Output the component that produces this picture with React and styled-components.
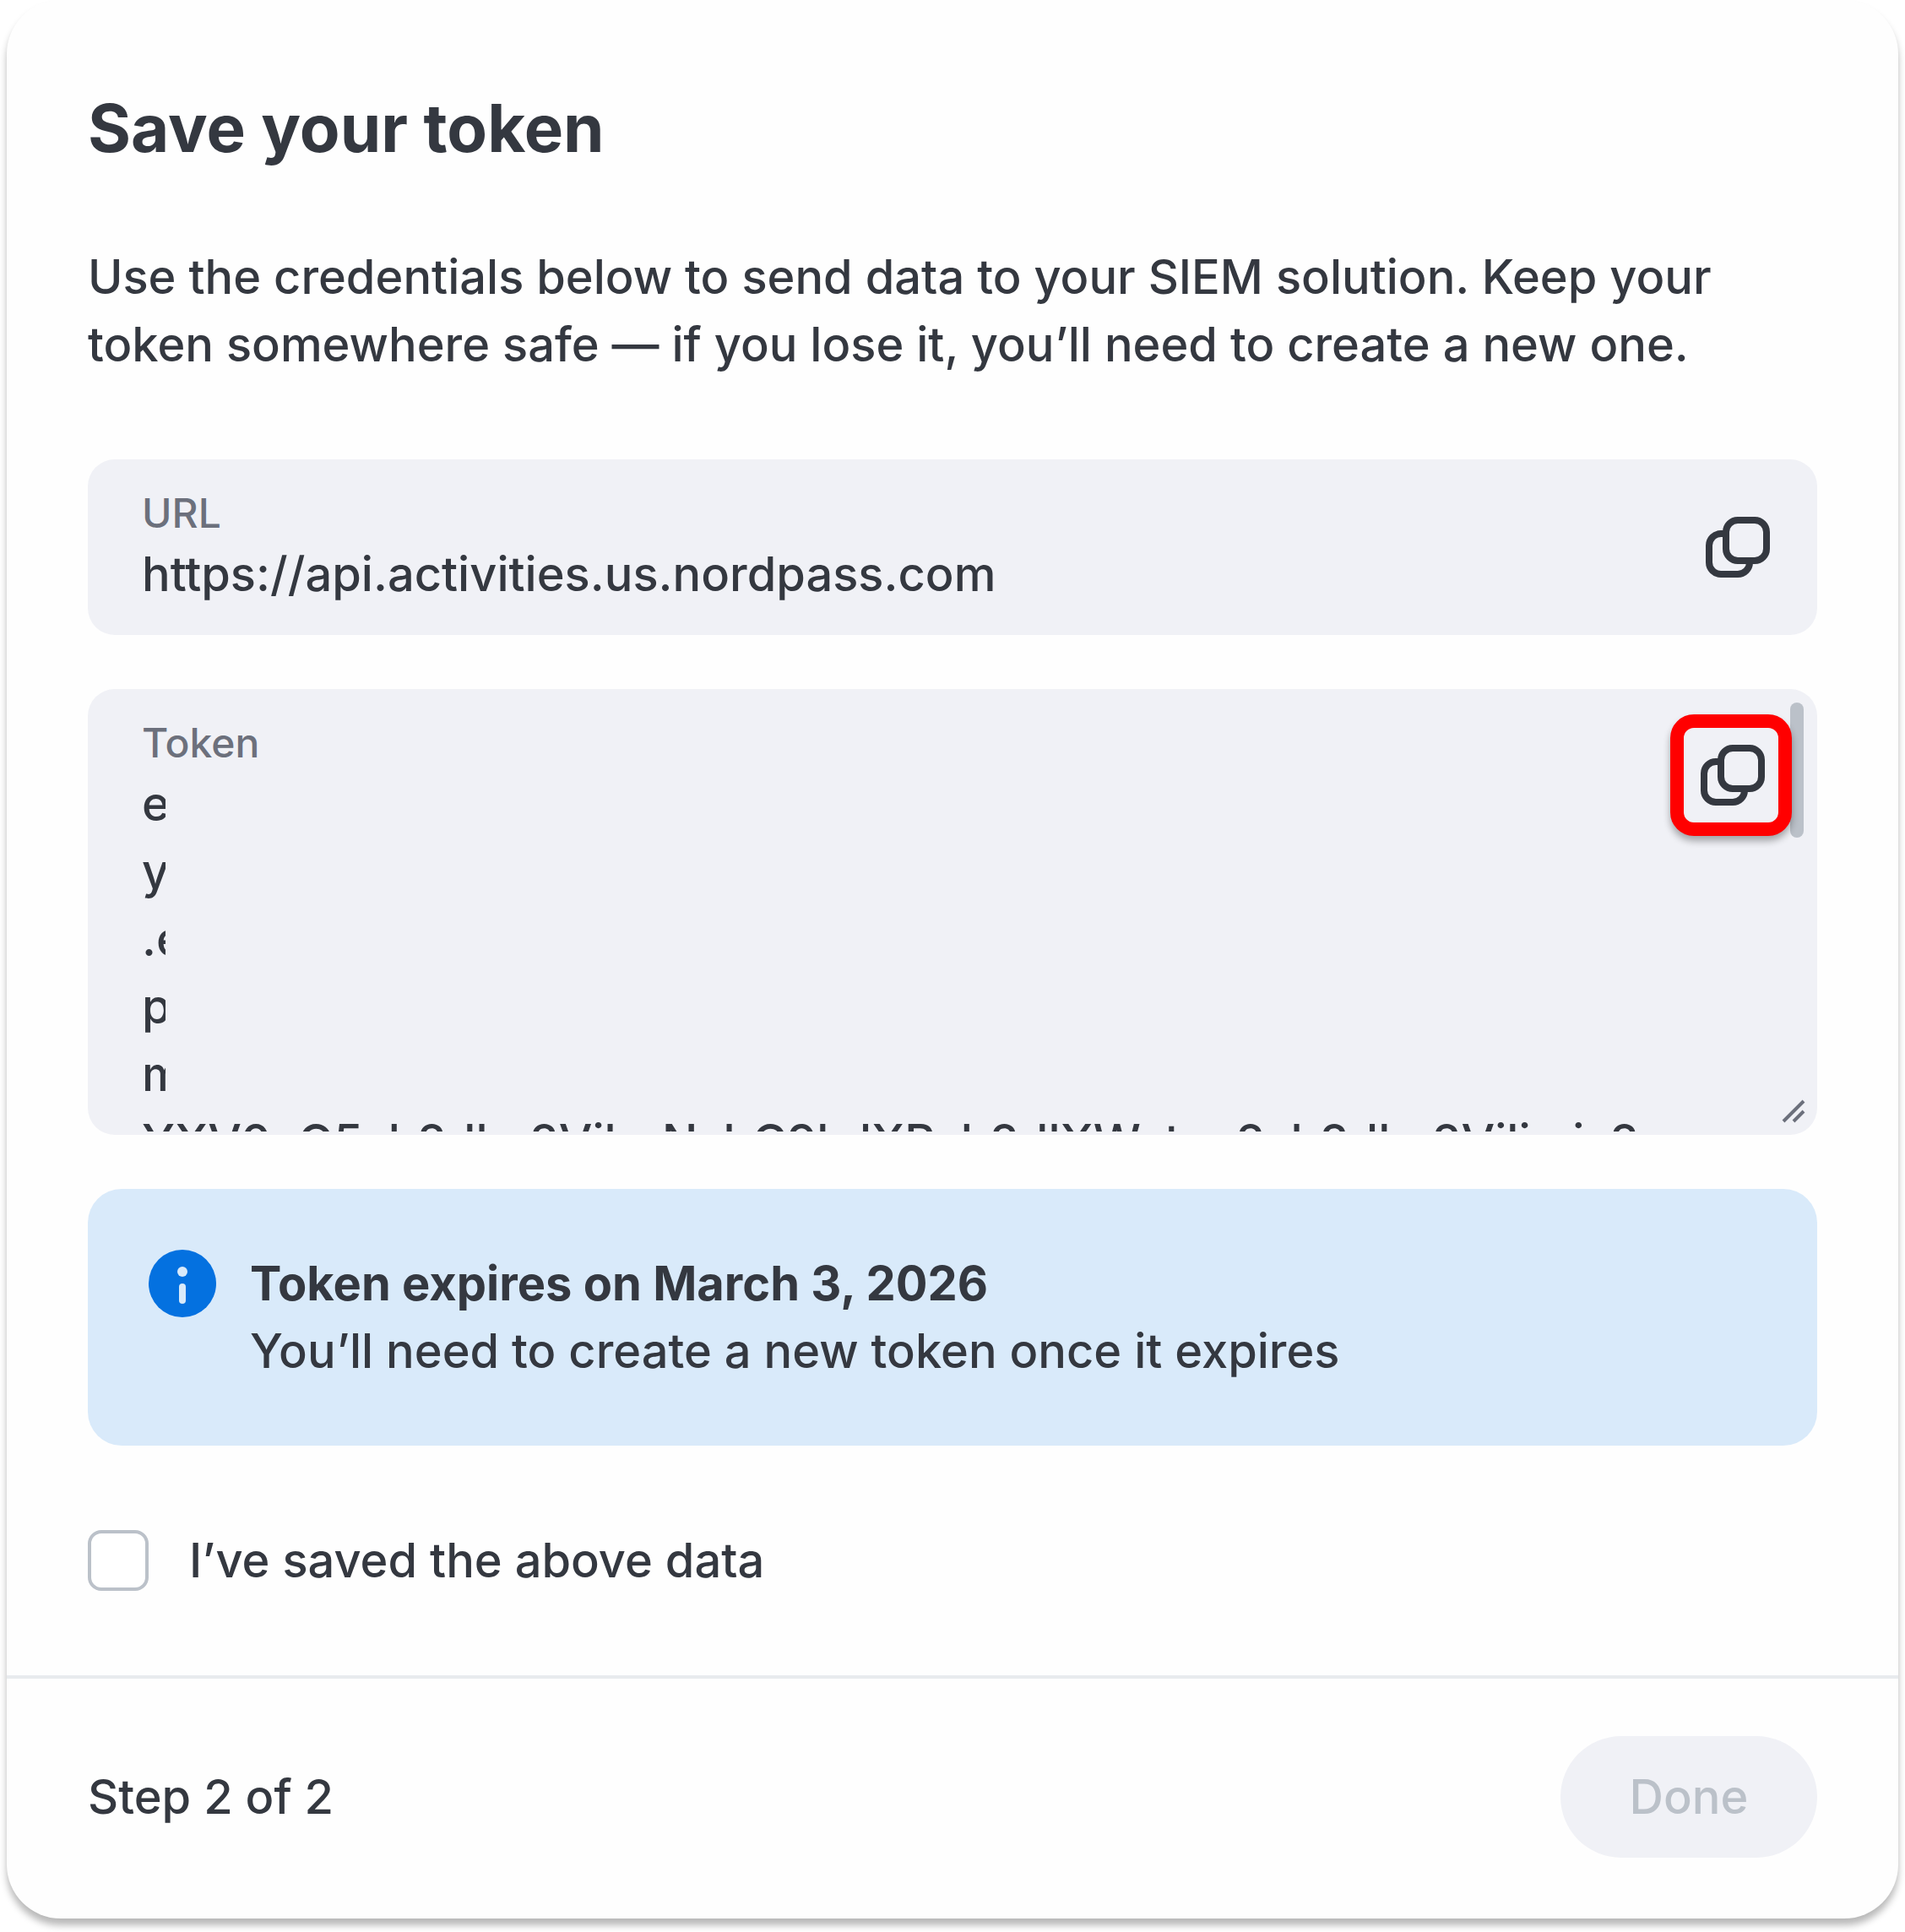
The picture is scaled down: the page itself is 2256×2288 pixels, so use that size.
import React, { useState } from "react";
import styled, { createGlobalStyle } from "styled-components";

const ink = "#343840";
const muted = "#6c707c";
const faint = "#bbc1c9";
const surface = "#f0f1f6";

const GlobalStyle = createGlobalStyle`
  *, *::before, *::after { box-sizing: border-box; }
  body {
    margin: 0;
    background: #fff;
    color: ${ink};
    font-family: Inter, "Liberation Sans", sans-serif;
    font-size: 56px;
    font-weight: 500;
    line-height: 80px;
  }
  input, textarea, button { font: inherit; color: inherit; }
`;

const Page = styled.div`
  padding: 0 8px 16px;
`;

const Dialog = styled.main`
  background: #fefefe;
  border-radius: 64px;
  box-shadow: 0 8px 8px rgba(0, 0, 0, 0.28);
`;

const Body = styled.div`
  padding: 96px;
`;

const Title = styled.h1`
  margin: 0 0 80px;
  font-size: 78px;
  line-height: 112px;
  font-weight: 700;
`;

const Intro = styled.p`
  margin: 0 0 96px;
`;

const Stack = styled.div`
  display: flex;
  flex-direction: column;
  gap: 64px;
  margin-bottom: 96px;
`;

const Field = styled.div`
  position: relative;
  display: flex;
  align-items: center;
  padding: 32px 24px 32px 64px;
  border-radius: 32px;
  background: ${surface};
`;

const TokenField = styled(Field)`
  padding: 32px 64px 4px;
`;

const FieldText = styled.div`
  flex: 1;
  display: flex;
  flex-direction: column;
`;

const FieldLabel = styled.label`
  font-size: 48px;
  line-height: 64px;
  color: ${muted};
`;

const UrlInput = styled.input`
  width: 100%;
  height: 80px;
  padding: 0;
  border: 0;
  outline: 0;
  background: transparent;
`;

const TokenArea = styled.textarea`
  display: block;
  width: 100%;
  height: 428px;
  padding: 0;
  border: 0;
  outline: 0;
  resize: none;
  overflow: hidden;
  white-space: pre;
  background: transparent;
`;

const Redaction = styled.div`
  position: absolute;
  top: 96px;
  left: 92px;
  right: 64px;
  height: 400px;
  background: ${surface};
`;

const ScrollThumb = styled.div`
  position: absolute;
  top: 16px;
  right: 16px;
  width: 16px;
  height: 160px;
  border-radius: 8px;
  background: ${faint};
`;

const ResizeGrip = styled.svg`
  position: absolute;
  right: 14px;
  bottom: 14px;
  width: 28px;
  height: 28px;
`;

const IconButton = styled.button`
  display: grid;
  place-items: center;
  width: 144px;
  height: 144px;
  padding: 0;
  border: 0;
  background: transparent;
`;

const HighlightedIconButton = styled(IconButton)`
  position: absolute;
  top: 30px;
  right: 30px;
  border: 16px solid #f00;
  border-radius: 28px;
  background: ${surface};
  box-shadow: 0 6px 8px rgba(0, 0, 0, 0.32);
`;

const Icon = styled.svg`
  flex: none;
  display: block;
  width: 80px;
  height: 80px;
`;

const Notice = styled.section`
  display: flex;
  gap: 40px;
  padding: 72px;
  border-radius: 40px;
  background: #d9eafa;
`;

const NoticeText = styled.div`
  display: flex;
  flex-direction: column;
`;

const NoticeTitle = styled.strong`
  font-weight: 700;
`;

const CheckRow = styled.label`
  display: flex;
  align-items: center;
  gap: 48px;
`;

const CheckBox = styled.input`
  appearance: none;
  flex: none;
  width: 72px;
  height: 72px;
  margin: 0;
  border: 4px solid ${faint};
  border-radius: 16px;
  background: #fff;
  &:checked { background: #0471e0; }
`;

const Footer = styled.footer`
  display: flex;
  align-items: center;
  justify-content: space-between;
  padding: 68px 96px 72px;
  border-top: 4px solid #e8ebee;
`;

const DoneButton = styled.button`
  min-width: 304px;
  height: 144px;
  padding: 0 80px;
  border: 0;
  border-radius: 72px;
  background: ${surface};
  &:disabled { color: ${faint}; }
`;

function CopyIcon() {
  return (
    <Icon viewBox="0 0 80 80" fill="none" stroke={ink} strokeWidth="8" aria-hidden="true">
      <rect x="28" y="8" width="48" height="48" rx="14" />
      <path d="M28 24H22a14 14 0 0 0-14 14v20a14 14 0 0 0 14 14h20a14 14 0 0 0 14-14v-2" />
    </Icon>
  );
}

function InfoIcon() {
  return (
    <Icon viewBox="0 0 80 80" fill="#d9eafa" aria-hidden="true">
      <circle cx="40" cy="40" r="40" fill="#0471e0" />
      <circle cx="40" cy="26" r="6" />
      <rect x="36" y="40" width="8" height="24" rx="4" />
    </Icon>
  );
}

const token = ["e", "y", ".e", "p", "m", "YXV0aG5sb2dlm2VibnNsbC9kdXRsb2dlXWstcn2sb2dlm2Vilimis2"].join("\n");

export default function App() {
  const [saved, setSaved] = useState(false);
  return (
    <Page>
      <GlobalStyle />
      <Dialog>
        <Body>
          <Title>Save your token</Title>
          <Intro>
            Use the credentials below to send data to your SIEM solution. Keep your token somewhere
            safe — if you lose it, you’ll need to create a new one.
          </Intro>
          <Stack>
            <Field>
              <FieldText>
                <FieldLabel htmlFor="url">URL</FieldLabel>
                <UrlInput id="url" readOnly value="https://api.activities.us.nordpass.com" />
              </FieldText>
              <IconButton type="button" aria-label="Copy URL"><CopyIcon /></IconButton>
            </Field>
            <TokenField>
              <FieldText>
                <FieldLabel htmlFor="token">Token</FieldLabel>
                <TokenArea id="token" readOnly value={token} />
              </FieldText>
              <Redaction />
              <ScrollThumb />
              <ResizeGrip viewBox="0 0 28 28" stroke={muted} strokeWidth="4" aria-hidden="true">
                <path d="M2 26L26 2M14 26L26 14" />
              </ResizeGrip>
              <HighlightedIconButton type="button" aria-label="Copy token"><CopyIcon /></HighlightedIconButton>
            </TokenField>
            <Notice>
              <InfoIcon />
              <NoticeText>
                <NoticeTitle>Token expires on March 3, 2026</NoticeTitle>
                <span>You’ll need to create a new token once it expires</span>
              </NoticeText>
            </Notice>
          </Stack>
          <CheckRow>
            <CheckBox type="checkbox" checked={saved} onChange={(e) => setSaved(e.target.checked)} />
            I’ve saved the above data
          </CheckRow>
        </Body>
        <Footer>
          <span>Step 2 of 2</span>
          <DoneButton type="button" disabled={!saved}>Done</DoneButton>
        </Footer>
      </Dialog>
    </Page>
  );
}
